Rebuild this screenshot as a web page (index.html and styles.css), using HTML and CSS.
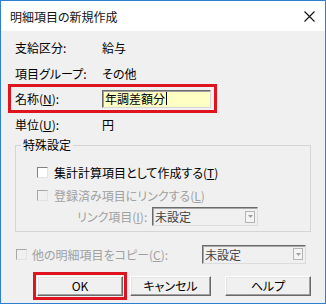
FILE: index.html
```html
<!DOCTYPE html>
<html lang="ja">
<head>
    <meta charset="UTF-8">
    <meta name="viewport" content="width=device-width, initial-scale=1.0">
    <title>明細項目の新規作成</title>
    <link rel="stylesheet" href="styles.css">
</head>
<body>
    <div class="window">
        <div class="titlebar">
            <span class="title">明細項目の新規作成</span>
            <svg class="close" width="11" height="11" viewBox="0 0 11 11">
                <path d="M0.5 0.5 L10.5 10.5 M10.5 0.5 L0.5 10.5" stroke="#111" stroke-width="1.1" fill="none"/>
            </svg>
        </div>

        <div class="content">
            <div class="row">
                <span class="label">支給区分:</span>
                <span>給与</span>
            </div>
            <div class="row">
                <span class="label">項目グループ:</span>
                <span>その他</span>
            </div>
            <div class="row mark">
                <span class="label">名称(<u>N</u>):</span>
                <div class="input">年調差額分<span class="caret"></span></div>
            </div>
            <div class="row">
                <span class="label">単位(<u>U</u>):</span>
                <span>円</span>
            </div>

            <fieldset class="group">
                <legend>特殊設定</legend>
                <div class="check">
                    <span class="box"></span>
                    <span>集計計算項目として作成する(<u>T</u>)</span>
                </div>
                <div class="check disabled">
                    <span class="box"></span>
                    <span>登録済み項目にリンクする(<u>L</u>)</span>
                </div>
                <div class="link-row">
                    <span class="link-label">リンク項目(<u>I</u>):</span>
                    <div class="combo link-combo">
                        <span class="combo-text">未設定</span>
                        <span class="drop"><svg width="5" height="3" viewBox="0 0 5 3"><path d="M0 0 H5 L2.5 3 Z" fill="#a0a0a0"/></svg></span>
                    </div>
                </div>
            </fieldset>

            <div class="copy-row">
                <div class="check disabled">
                    <span class="box"></span>
                    <span>他の明細項目をコピー(<u>C</u>):</span>
                </div>
                <div class="combo copy-combo">
                    <span class="combo-text">未設定</span>
                    <span class="drop"><svg width="5" height="3" viewBox="0 0 5 3"><path d="M0 0 H5 L2.5 3 Z" fill="#a0a0a0"/></svg></span>
                </div>
            </div>

            <div class="buttons">
                <button class="btn btn-ok mark-btn">OK</button>
                <button class="btn btn-cancel">キャンセル</button>
                <button class="btn btn-help">ヘルプ</button>
            </div>
        </div>
    </div>
</body>
</html>
```

FILE: styles.css
```css
* {
    box-sizing: border-box;
}
body {
    margin: 0;
    font-family: "Noto Sans CJK JP", "Noto Sans", sans-serif;
    font-size: 12px;
    font-feature-settings: "palt";
    color: #000;
    background: #fff;
}
.window {
    width: 326px;
    height: 304px;
    border: 1px solid #2d7fd3;
    background: #f0f0f0;
    display: flex;
    flex-direction: column;
}
.titlebar {
    height: 30px;
    background: #fff;
    display: flex;
    align-items: center;
    padding: 0 10px 0 9px;
    flex-shrink: 0;
}
.title {
    flex: 1;
    font-size: 12px;
    color: #111;
}
.close {
    display: block;
}
.content {
    padding: 3px 14px 0 14px;
    display: flex;
    flex-direction: column;
}
.row {
    height: 26px;
    display: flex;
    align-items: center;
}
.label {
    width: 87px;
    flex-shrink: 0;
}
.row.mark {
    height: 25px;
    width: 205px;
    margin-left: -5px;
    padding-left: 5px;
    outline: 3px solid #e0141e;
    outline-offset: -1px;
}
.input {
    width: 109px;
    height: 18px;
    background: #ffffc4;
    border: 1px solid;
    border-color: #6b6b6b #d8d8d8 #d8d8d8 #6b6b6b;
    box-shadow: inset 1px 1px 0 #a0a0a0;
    display: flex;
    align-items: center;
    padding-left: 2px;
    line-height: 16px;
}
.caret {
    display: inline-block;
    width: 1px;
    height: 13px;
    background: #000;
    margin-left: 1px;
}
u {
    text-decoration: underline;
    text-underline-offset: 1px;
}
.group {
    margin: 0;
    padding: 0 0 5px 5px;
    border: 1px solid #d5d5d5;
    min-width: 0;
}
.group legend {
    padding: 0 2px;
    line-height: 16px;
}
.check {
    display: flex;
    align-items: center;
    gap: 6px;
    height: 23px;
}
.group .check {
    margin-left: 16px;
}
.group .check:first-of-type {
    margin-top: 8px;
}
.box {
    width: 11px;
    height: 11px;
    background: #fff;
    border: 1px solid;
    border-color: #808080 #e3e3e3 #e3e3e3 #808080;
    flex-shrink: 0;
}
.check.disabled {
    color: #a0a0a0;
}
.check.disabled .box {
    background: #f0f0f0;
    border-color: #a8a8a8 #e3e3e3 #e3e3e3 #a8a8a8;
}
.link-row {
    height: 19px;
    display: flex;
    align-items: center;
    margin-left: 56px;
    color: #a0a0a0;
}
.link-label {
    width: 75px;
    white-space: nowrap;
}
.combo {
    height: 19px;
    border: 1px solid;
    border-color: #6b6b6b #dcdcdc #dcdcdc #6b6b6b;
    box-shadow: inset 1px 1px 0 #a8a8a8;
    background: #f0f0f0;
    display: flex;
    align-items: center;
    padding: 0 2px 0 2px;
    color: #444;
}
.combo-text {
    flex: 1;
}
.link-combo {
    width: 106px;
}
.drop {
    width: 10px;
    height: 12px;
    border: 1px solid #b4b4b4;
    background: #f4f4f4;
    display: flex;
    align-items: center;
    justify-content: center;
}
.drop svg {
    display: block;
}
.copy-row {
    margin-top: 12px;
    height: 20px;
    display: flex;
    align-items: center;
}
.copy-row .check {
    margin-left: 1px;
    gap: 5px;
}
.copy-combo {
    width: 104px;
    margin-left: auto;
    margin-right: 5px;
}
.buttons {
    margin-top: 12px;
    display: flex;
    padding-left: 22px;
}
.btn {
    height: 20px;
    font-family: inherit;
    font-size: 12px;
    font-feature-settings: "palt";
    color: #000;
    background: #f0f0f0;
    border: 1px solid;
    border-color: #fff #696969 #696969 #fff;
    box-shadow: inset -1px -1px 0 #a0a0a0, inset 1px 1px 0 #e3e3e3;
    padding: 0;
    line-height: 16px;
}
.btn-ok {
    width: 86px;
}
.btn-cancel {
    width: 81px;
    margin-left: 7px;
}
.btn-help {
    width: 86px;
    margin-left: 14px;
}
.mark-btn {
    outline: 3px solid #e0141e;
    outline-offset: 1px;
}
```
